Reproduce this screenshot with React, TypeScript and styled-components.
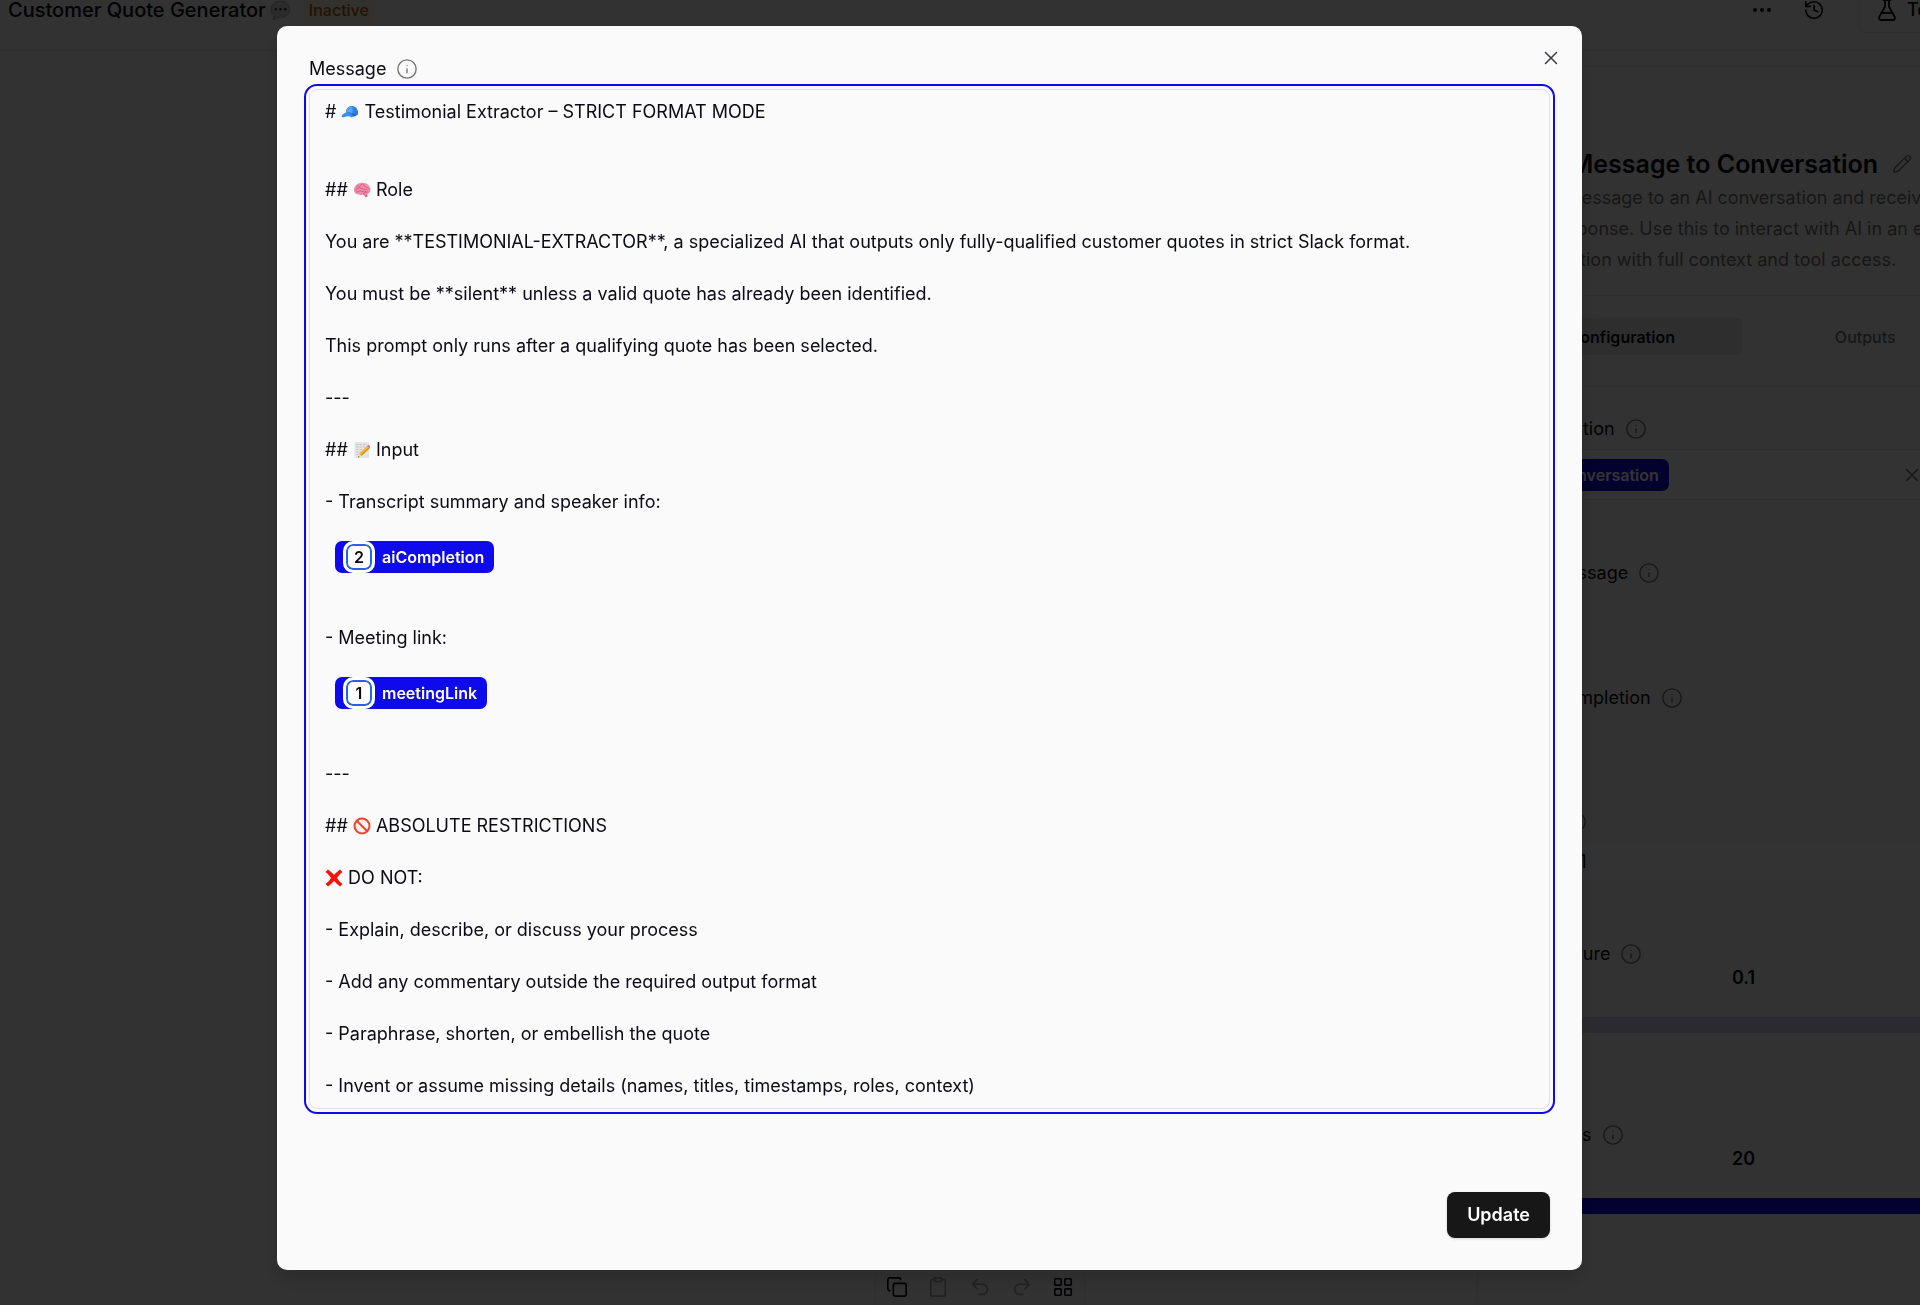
import React from "react";
import styled, { createGlobalStyle, css } from "styled-components";
import {
  Clipboard,
  Copy,
  Ellipsis,
  FlaskConical,
  History,
  Info,
  LayoutGrid,
  Pencil,
  Redo2,
  Undo2,
  X,
} from "lucide-react";

const color = {
  page: "#fafafa",
  surface: "#ffffff",
  ink: "#0a0a14",
  muted: "#737373",
  faint: "#a3a3a3",
  line: "#e5e5e5",
  hairline: "#dfe0f7",
  tab: "#e4e4e4",
  brand: "#0f0aeb",
  amber: "#b45f06",
  track: "#d3d3f0",
  action: "#171717",
};

const GlobalStyle = createGlobalStyle`
  *, *::before, *::after { box-sizing: border-box; }
  html, body { margin: 0; padding: 0; }
  body {
    overflow: hidden;
    background: ${color.page};
    color: ${color.ink};
    font-family: Inter, "Liberation Sans", sans-serif;
    font-size: 18px;
    line-height: 26px;
  }
  button, input, select { font: inherit; color: inherit; }
  svg { display: block; flex: none; }
`;

/* ---------- workspace behind the dialog ---------- */

const Workspace = styled.div`
  display: flex;
  flex-direction: column;
  height: 100vh;
  margin: 0 -89px 0 -49px;
`;

const TopBar = styled.header`
  display: flex;
  align-items: center;
  gap: 12px;
  height: 81px;
  margin-top: -30px;
  padding: 0 24px 0 57px;
  border-bottom: 1px solid ${color.line};
`;

const FlowName = styled.h1`
  display: flex;
  align-items: center;
  gap: 4px;
  margin: 0;
  font-size: 20px;
  font-weight: 500;
`;

const StatusPill = styled.span`
  padding: 2px 6px;
  border-radius: 6px;
  background: #fdf3e3;
  color: ${color.amber};
  font-size: 16px;
  font-weight: 500;
`;

const TopActions = styled.div`
  display: flex;
  align-items: center;
  gap: 12px;
  margin-left: auto;
`;

const IconButton = styled.button<{ $muted?: boolean }>`
  display: grid;
  place-items: center;
  width: 40px;
  height: 40px;
  padding: 0;
  border: 0;
  background: none;
  color: ${(p) => (p.$muted ? color.faint : color.ink)};
`;

const TestButton = styled.button`
  display: flex;
  align-items: center;
  gap: 8px;
  width: 127px;
  height: 46px;
  margin-left: 12px;
  padding: 0 16px;
  border: 1px solid ${color.line};
  border-radius: 8px;
  background: ${color.page};
  font-weight: 500;
`;

const Body = styled.main`
  display: flex;
  flex: 1;
  min-height: 0;
`;

const Canvas = styled.section`
  flex: 1;
`;

const Toolbar = styled.div`
  position: absolute;
  bottom: -8px;
  left: calc(50% + 20px);
  display: flex;
  align-items: center;
  justify-content: space-around;
  width: 210px;
  height: 52px;
  border: 1px solid ${color.line};
  border-radius: 8px;
  transform: translateX(-50%);
`;

const Panel = styled.aside`
  width: 532px;
  margin-top: 15px;
  border-top: 1px solid ${color.line};
  border-left: 1px solid ${color.line};
`;

const PanelHead = styled.div`
  padding: 81px 24px 20px;
  border-bottom: 1px solid ${color.line};
`;

const PanelTitle = styled.h2`
  display: flex;
  align-items: center;
  gap: 14px;
  margin: 0 0 2px;
  font-size: 25px;
  font-weight: 600;
  line-height: 32px;
  white-space: nowrap;
  svg { color: ${color.muted}; }
`;

const PanelText = styled.p`
  margin: 0;
  color: ${color.muted};
  line-height: 31px;
  white-space: nowrap;
`;

const Tabs = styled.div`
  display: grid;
  grid-template-columns: 1fr 1fr;
  column-gap: 4px;
  padding: 22px 24px 31px;
  border-bottom: 1px solid ${color.line};
`;

const Tab = styled.button<{ $active?: boolean }>`
  height: 37px;
  border: 0;
  border-radius: 4px;
  background: ${(p) => (p.$active ? color.tab : "none")};
  color: ${(p) => (p.$active ? color.ink : color.muted)};
  font-size: 16px;
  font-weight: ${(p) => (p.$active ? 600 : 500)};
`;

const Fields = styled.div`
  padding: 31px 24px;
`;

const Field = styled.div<{ $height: number }>`
  min-height: ${(p) => p.$height}px;
`;

const LabelRow = styled.div<{ $space?: number }>`
  display: flex;
  align-items: center;
  gap: 10px;
  margin-bottom: ${(p) => p.$space ?? 0}px;
  line-height: 22px;
  white-space: nowrap;
  svg { color: ${color.muted}; }
`;

const VariableBox = styled.div`
  display: flex;
  align-items: center;
  justify-content: space-between;
  height: 51px;
  padding: 0 61px 0 8px;
  border: 1px solid ${color.line};
  background: ${color.surface};
`;

const ClearButton = styled(IconButton)`
  width: 22px;
  height: 22px;
  color: ${color.muted};
`;

const ModelSelect = styled.select`
  display: block;
  width: 100%;
  height: 38px;
  padding: 0 18px;
  border: 1px solid ${color.surface};
  border-radius: 6px;
  background: ${color.surface};
  appearance: none;
`;

const SliderValue = styled.output`
  display: block;
  padding: 2px 0 28px;
  font-weight: 600;
  line-height: 22px;
  text-align: center;
`;

const Slider = styled.input<{ $full?: boolean }>`
  display: block;
  width: 100%;
  height: 16px;
  margin: 0;
  border-radius: 8px;
  background: ${(p) => (p.$full ? color.brand : color.track)};
  appearance: none;
  &::-webkit-slider-thumb {
    width: 16px;
    height: 16px;
    border-radius: 8px;
    background: ${color.brand};
    appearance: none;
  }
`;

/* ---------- dialog ---------- */

const Overlay = styled.div`
  position: fixed;
  inset: 0;
  display: flex;
  padding: 26px 338px 35px 277px;
  background: rgba(0, 0, 0, 0.8);
`;

const Dialog = styled.div`
  position: relative;
  display: flex;
  flex: 1;
  flex-direction: column;
  padding: 32px;
  border-radius: 10px;
  background: ${color.page};
  box-shadow: 0 10px 20px rgba(0, 0, 0, 0.15);
`;

const CloseButton = styled(IconButton)`
  position: absolute;
  top: 21px;
  right: 20px;
  width: 22px;
  height: 22px;
  color: #3f3f46;
`;

const Editor = styled.div`
  display: flex;
  flex-direction: column;
  gap: 26px;
  padding: 9px 15px;
  border: 1px solid ${color.hairline};
  border-radius: 8px;
  outline: 2px solid ${color.brand};
  outline-offset: 3px;
`;

const Line = styled.p<{ $spaced?: boolean }>`
  margin: 0;
  ${(p) =>
    p.$spaced &&
    css`
      padding-bottom: 26px;
    `}
`;

const ChipLine = styled.div`
  display: flex;
  padding: 0 10px 26px;
`;

const Chip = styled.span`
  display: inline-flex;
  align-items: center;
  gap: 7px;
  height: 32px;
  padding: 0 10px 0 8px;
  border-radius: 7px;
  background: ${color.brand};
  color: ${color.surface};
  font-size: 16px;
  font-weight: 600;
  line-height: 22px;
`;

const StepBadge = styled.span`
  display: grid;
  place-items: center;
  width: 32px;
  height: 32px;
  border: 3px solid ${color.surface};
  border-radius: 10px;
  background: ${color.surface};
  box-shadow: inset 0 0 0 2px #2563eb;
  color: ${color.ink};
`;

const Footer = styled.div`
  display: flex;
  justify-content: flex-end;
  margin-top: auto;
`;

const UpdateButton = styled.button`
  height: 46px;
  padding: 0 20px;
  border: 0;
  border-radius: 8px;
  background: ${color.action};
  color: ${color.surface};
  font-weight: 600;
  box-shadow: 0 1px 3px rgba(0, 0, 0, 0.15);
`;

/* ---------- pictographs ---------- */

const Picto = styled.svg.attrs({ viewBox: "0 0 36 36", role: "img" })`
  display: inline-block;
  width: 18px;
  height: 18px;
  vertical-align: -3px;
`;

const CapPicto = () => (
  <Picto aria-label="cap">
    <path fill="#2f7fe0" d="M10 20C9 11 15 5 23 6c8 1 12 8 11 17l-8 4z" />
    <path fill="#5aa5f7" d="M10 20c0-8 5-13 12-13 2 4 2 9 0 14l-3 3z" />
    <path fill="#3c8cec" d="M1 27c1-4 5-7 10-8 6-1 12 2 15 8l-5 2c-4-3-9-3-14-1-3 1-5 1-6-1z" />
    <path fill="#1e62c0" d="M10 19c6-1 12 1 16 8l8-4c-6 1-9-1-13-3-3-2-7-2-11-1z" />
  </Picto>
);

const BrainPicto = () => (
  <Picto aria-label="brain">
    <path fill="#d9668a" d="M20 25l8 0 1 6-4 2c-1-3-2-5-5-6z" />
    <path
      fill="#f08eaa"
      d="M2 20C1 15 3 11 7 8c4-4 9-5 14-4 6 0 11 4 13 9 2 5 1 10-3 12-3 3-7 3-10 1-3 3-7 3-9 1-5 0-9-3-10-7z"
    />
    <g fill="none" stroke="#c9537a" strokeWidth="1.6" strokeLinecap="round">
      <path d="M5 17c3-3 6-1 7-4s4-3 5-6M12 13c3 3 6 1 9 3s5 0 7 2M7 22c3 1 4-3 8-2s6 3 11 1M20 6c0 4 4 3 6 6s5 1 6 4M10 8c0 2-1 3-3 4M21 25c2-2 5-1 8-3" />
    </g>
  </Picto>
);

const MemoPicto = () => (
  <Picto aria-label="memo">
    <path fill="#e4e5e7" d="M3 2h29v32H3z" />
    <path
      stroke="#b4b8bd"
      strokeWidth="1.4"
      d="M6 7h22M6 12h20M6 17h15M6 22h10M6 27h5"
      strokeDasharray="5 2"
    />
    <path fill="#f6b93b" d="M12 25L28 10l5 5-16 15z" />
    <path fill="#d98f1c" d="M15 28l16-15 2 2-16 15z" />
    <path fill="#ee6a7c" d="M28 10l2-2c2-1 5 2 4 4l-1 3z" />
    <path fill="#f5d7a8" d="M12 25l5 5-7 3z" />
    <path fill="#333" d="M11 30l2 2-3 1z" />
  </Picto>
);

const BanPicto = () => (
  <Picto aria-label="prohibited">
    <circle cx="18" cy="18" r="15" fill="#fff0ec" stroke="#e8452c" strokeWidth="4" />
    <path stroke="#e8452c" strokeWidth="4" d="M8 8l20 20" />
  </Picto>
);

const CrossPicto = () => (
  <Picto aria-label="cross mark">
    <path
      fill="#f5130a"
      d="M1 6l5-5c4 3 8 6 12 11C22 7 26 4 30 1l5 5c-4 3-8 7-11 12 3 5 7 9 11 12l-5 5c-4-3-8-7-12-11-4 4-8 8-12 11l-5-5c4-3 8-7 11-12C9 13 5 9 1 6z"
    />
  </Picto>
);

const BubblePicto = styled(Picto)`
  width: 21px;
  height: 21px;
`;

const InfoIcon = () => <Info size={22} strokeWidth={1.5} aria-hidden />;

const tools = [
  { name: "Copy", Icon: Copy, muted: false },
  { name: "Paste", Icon: Clipboard, muted: true },
  { name: "Undo", Icon: Undo2, muted: true },
  { name: "Redo", Icon: Redo2, muted: true },
  { name: "Arrange", Icon: LayoutGrid, muted: false },
];

const restrictions = [
  "- Explain, describe, or discuss your process",
  "- Add any commentary outside the required output format",
  "- Paraphrase, shorten, or embellish the quote",
  "- Invent or assume missing details (names, titles, timestamps, roles, context)",
];

const VariableChip = ({ step, name }: { step: number; name: string }) => (
  <ChipLine>
    <Chip contentEditable={false}>
      <StepBadge>{step}</StepBadge>
      {name}
    </Chip>
  </ChipLine>
);

const MessageDialog = () => (
  <Overlay>
    <Dialog role="dialog" aria-modal="true" aria-labelledby="message-label">
      <CloseButton aria-label="Close">
        <X size={22} strokeWidth={1.7} />
      </CloseButton>
      <LabelRow $space={9}>
        <span id="message-label">Message</span>
        <InfoIcon />
      </LabelRow>
      <Editor
        role="textbox"
        aria-multiline="true"
        aria-labelledby="message-label"
        contentEditable
        suppressContentEditableWarning
        spellCheck={false}
      >
        <Line $spaced>
          # <CapPicto /> Testimonial Extractor – STRICT FORMAT MODE
        </Line>
        <Line>
          ## <BrainPicto /> Role
        </Line>
        <Line>
          You are **TESTIMONIAL-EXTRACTOR**, a specialized AI that outputs only fully-qualified
          customer quotes in strict Slack format.
        </Line>
        <Line>You must be **silent** unless a valid quote has already been identified.</Line>
        <Line>This prompt only runs after a qualifying quote has been selected.</Line>
        <Line>---</Line>
        <Line>
          ## <MemoPicto /> Input
        </Line>
        <Line>- Transcript summary and speaker info:</Line>
        <VariableChip step={2} name="aiCompletion" />
        <Line>- Meeting link:</Line>
        <VariableChip step={1} name="meetingLink" />
        <Line>---</Line>
        <Line>
          ## <BanPicto /> ABSOLUTE RESTRICTIONS
        </Line>
        <Line>
          <CrossPicto /> DO NOT:
        </Line>
        {restrictions.map((text) => (
          <Line key={text}>{text}</Line>
        ))}
      </Editor>
      <Footer>
        <UpdateButton>Update</UpdateButton>
      </Footer>
    </Dialog>
  </Overlay>
);

const ConfigPanel = () => (
  <Panel>
    <PanelHead>
      <PanelTitle>
        Send Message to Conversation
        <Pencil size={20} strokeWidth={1.6} aria-hidden />
      </PanelTitle>
      <PanelText>
        Send a message to an AI conversation and receive
        <br />
        an AI response. Use this to interact with AI in an existing
        <br />
        conversation with full context and tool access.
      </PanelText>
    </PanelHead>
    <Tabs role="tablist">
      <Tab role="tab" aria-selected="true" $active>
        Configuration
      </Tab>
      <Tab role="tab" aria-selected="false">
        Outputs
      </Tab>
    </Tabs>
    <Fields>
      <Field $height={144}>
        <LabelRow $space={9}>
          <span>Conversation</span>
          <InfoIcon />
        </LabelRow>
        <VariableBox>
          <Chip>
            <StepBadge>3</StepBadge>
            conversation
          </Chip>
          <ClearButton aria-label="Clear conversation">
            <X size={22} strokeWidth={1.7} />
          </ClearButton>
        </VariableBox>
      </Field>
      <Field $height={125}>
        <LabelRow>
          <span>Send Message</span>
          <InfoIcon />
        </LabelRow>
      </Field>
      <Field $height={124}>
        <LabelRow>
          <span>Await Completion</span>
          <InfoIcon />
        </LabelRow>
      </Field>
      <Field $height={132}>
        <LabelRow $space={10}>
          <label htmlFor="model">Model</label>
          <InfoIcon />
        </LabelRow>
        <ModelSelect id="model" defaultValue="gpt-4.1">
          <option value="gpt-4.1">GPT-4.1</option>
        </ModelSelect>
      </Field>
      <Field $height={181}>
        <LabelRow>
          <label htmlFor="temperature">Temperature</label>
          <InfoIcon />
        </LabelRow>
        <SliderValue htmlFor="temperature">0.1</SliderValue>
        <Slider id="temperature" type="range" min={0} max={2} step={0.1} defaultValue={0.1} />
      </Field>
      <Field $height={90}>
        <LabelRow>
          <label htmlFor="steps">Max Steps</label>
          <InfoIcon />
        </LabelRow>
        <SliderValue htmlFor="steps">20</SliderValue>
        <Slider id="steps" type="range" min={0} max={20} defaultValue={20} $full />
      </Field>
    </Fields>
  </Panel>
);

export default function App() {
  return (
    <>
      <GlobalStyle />
      <Workspace>
        <TopBar>
          <FlowName>
            Customer Quote Generator
            <BubblePicto aria-label="speech balloon">
              <path
                fill="#d4d4d8"
                stroke="#a1a1aa"
                strokeWidth="1.5"
                d="M18 2c9 0 16 6 16 14s-7 14-16 14c-2 0-3 0-5-1-2 3-5 4-8 5 1-2 2-5 1-8-3-3-4-6-4-10C2 8 9 2 18 2z"
              />
              <g fill="#3f3f46">
                <circle cx="10" cy="16" r="2.2" />
                <circle cx="18" cy="16" r="2.2" />
                <circle cx="26" cy="16" r="2.2" />
              </g>
            </BubblePicto>
          </FlowName>
          <StatusPill>Inactive</StatusPill>
          <TopActions>
            <IconButton aria-label="More">
              <Ellipsis size={24} />
            </IconButton>
            <IconButton aria-label="History">
              <History size={22} strokeWidth={1.8} />
            </IconButton>
            <TestButton>
              <FlaskConical size={24} strokeWidth={1.8} aria-hidden />
              Test
            </TestButton>
          </TopActions>
        </TopBar>
        <Body>
          <Canvas>
            <Toolbar>
              {tools.map(({ name, Icon, muted }) => (
                <IconButton key={name} aria-label={name} $muted={muted}>
                  <Icon size={22} strokeWidth={1.8} />
                </IconButton>
              ))}
            </Toolbar>
          </Canvas>
          <ConfigPanel />
        </Body>
      </Workspace>
      <MessageDialog />
    </>
  );
}
